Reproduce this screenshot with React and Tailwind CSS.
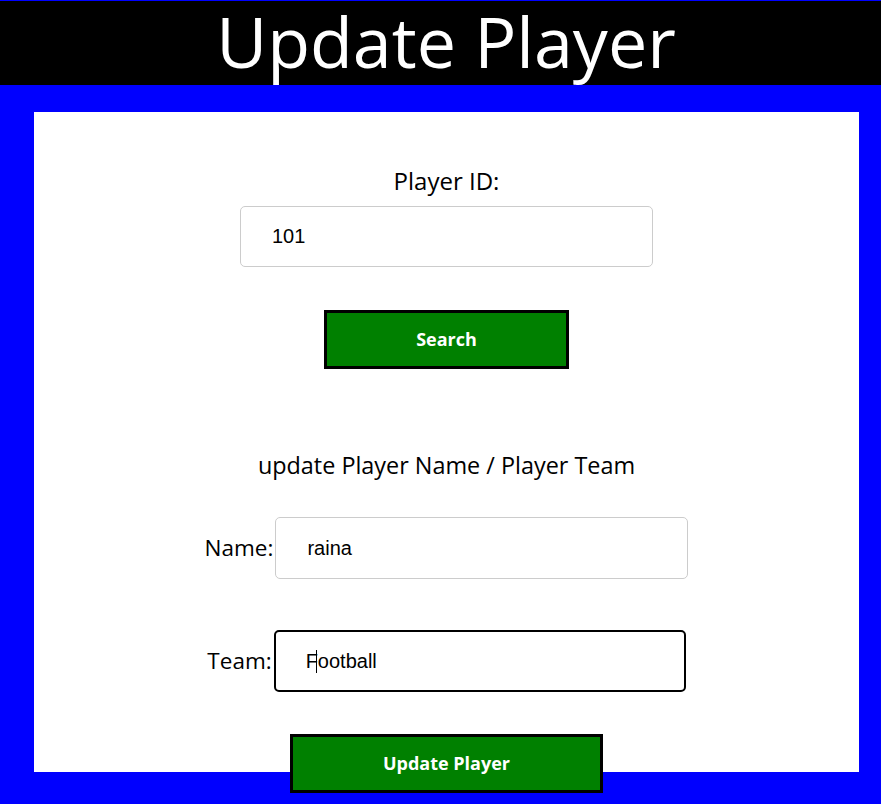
import React, { useState } from "react";

const App = () => {
  const [playerId, setPlayerId] = useState("101");
  const [name, setName] = useState("raina");
  const [team, setTeam] = useState("Football");

  return (
    <div className="min-h-[804px] bg-[#0000ff] pt-px font-['Open_Sans',sans-serif]">
      <h1 className="h-[84px] bg-black text-white text-center pl-[11px] text-[70px] leading-[80px]">
        Update Player
      </h1>

      <div className="pt-[27px] pl-[34px]">
        <div className="w-[825px] h-[660px] bg-white flex flex-col items-center">
          <label className="shrink-0 mt-[56px] text-[24px] leading-[26px] text-black">Player ID:</label>
          <input
            className="shrink-0 mt-[12px] w-[413px] h-[61px] border border-[#cccccc] rounded-[5px] px-[31px] text-[20px] font-['Liberation_Sans',sans-serif] outline-none"
            value={playerId}
            onChange={(e) => setPlayerId(e.target.value)}
          />
          <button className="shrink-0 mt-[43px] w-[245px] h-[59px] bg-[#008000] border-[3px] border-black text-white font-bold text-[18px]">
            Search
          </button>

          <p className="shrink-0 mt-[83px] text-[23.4px] leading-[26px] text-black">
            update Player Name / Player Team
          </p>

          <div className="shrink-0 mt-[39px] flex items-center">
            <label className="text-[22.5px] text-black">Name:</label>
            <input
              className="ml-[2px] w-[413px] h-[62px] border border-[#cccccc] rounded-[5px] px-[31px] text-[20px] font-['Liberation_Sans',sans-serif] outline-none"
              value={name}
              onChange={(e) => setName(e.target.value)}
            />
          </div>

          <div className="shrink-0 mt-[51px] flex items-center">
            <label className="text-[22.5px] text-black">Team:</label>
            <div className="relative ml-[2px]">
              <input
                className="w-[412px] h-[62px] border-2 border-black rounded-[5px] px-[30px] text-[20px] font-['Liberation_Sans',sans-serif] outline-none"
                value={team}
                onChange={(e) => setTeam(e.target.value)}
              />
              <span className="absolute left-[42px] top-[20px] w-px h-[23px] bg-black" />
            </div>
          </div>

          <button className="shrink-0 mt-[42px] w-[313px] h-[59px] bg-[#008000] border-[3px] border-black text-white font-bold text-[18px]">
            Update Player
          </button>
        </div>
      </div>
    </div>
  );
};

export default App;
